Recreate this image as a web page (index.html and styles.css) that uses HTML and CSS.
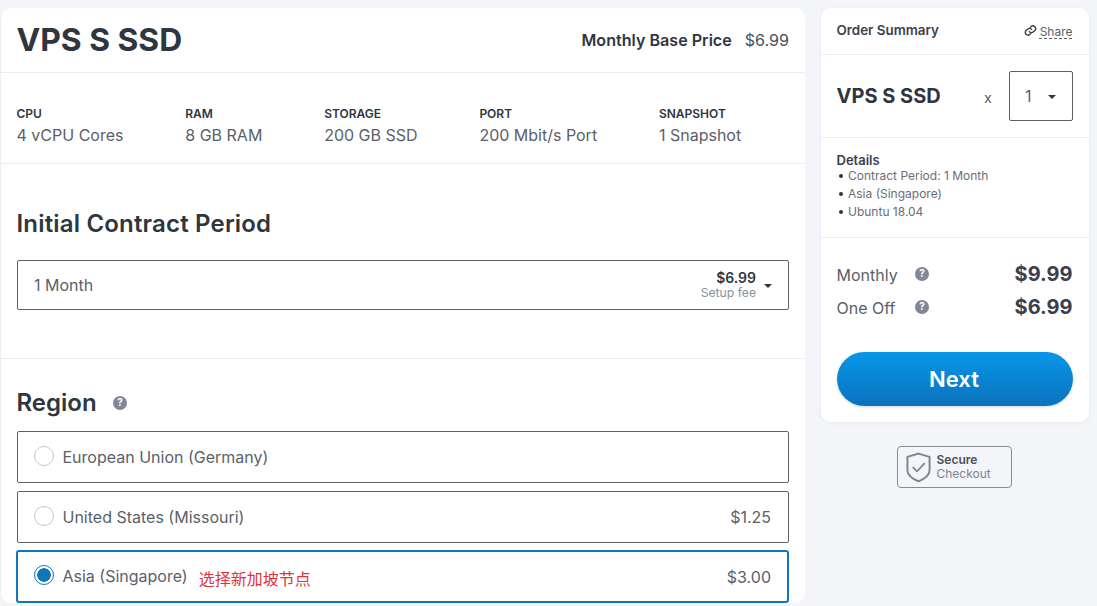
FILE: index.html
```html
<!DOCTYPE html>
<html lang="en">
<head>
<meta charset="utf-8">
<title>VPS S SSD</title>
<link rel="stylesheet" href="styles.css">
</head>
<body>
<div class="page">
  <main class="card product">
    <header class="product-head">
      <h1>VPS S SSD</h1>
      <div class="base-price"><strong>Monthly Base Price</strong><span>$6.99</span></div>
    </header>
    <section class="specs">
      <div class="spec"><b>CPU</b><span>4 vCPU Cores</span></div>
      <div class="spec"><b>RAM</b><span>8 GB RAM</span></div>
      <div class="spec"><b>STORAGE</b><span>200 GB SSD</span></div>
      <div class="spec"><b>PORT</b><span>200 Mbit/s Port</span></div>
      <div class="spec"><b>SNAPSHOT</b><span>1 Snapshot</span></div>
    </section>
    <section class="contract">
      <h2 class="contract-title">Initial Contract Period</h2>
      <div class="select">
        <span class="select-label">1 Month</span>
        <div class="setup"><b>$6.99</b><span>Setup fee</span></div>
        <i class="caret"></i>
      </div>
    </section>
    <section class="region">
      <h2 class="region-title">Region
        <svg class="help help-region" viewBox="0 0 14 14"><circle cx="7" cy="7" r="7" fill="#7f8798"/><text x="7" y="10.4" text-anchor="middle" class="help-q">?</text></svg>
      </h2>
      <div class="options">
        <label class="option"><i class="radio"></i><span class="option-name">European Union (Germany)</span></label>
        <label class="option"><i class="radio"></i><span class="option-name">United States (Missouri)</span><span class="option-price">$1.25</span></label>
        <label class="option selected"><i class="radio"></i><span class="option-name">Asia (Singapore)</span><span class="note">选择新加坡节点</span><span class="option-price">$3.00</span></label>
      </div>
    </section>
  </main>
  <aside class="side">
    <div class="card summary">
      <div class="sum-head">
        <b>Order Summary</b>
        <span class="share">
          <svg viewBox="0 0 24 24" class="link-icon"><path d="M10 14a5 5 0 0 0 7.5.5l3-3a5 5 0 0 0-7-7l-1.700 1.700M14 10a5 5 0 0 0-7.500-.5l-3 3a5 5 0 0 0 7 7l1.700-1.700" fill="none" stroke="#3b414c" stroke-width="2.600" stroke-linecap="round"/></svg>
          <u>Share</u>
        </span>
      </div>
      <div class="sum-product">
        <b>VPS S SSD</b>
        <span class="times">x</span>
        <div class="qty"><span>1</span><i class="caret"></i></div>
      </div>
      <div class="details">
        <b>Details</b>
        <ul>
          <li>Contract Period: 1 Month</li>
          <li>Asia (Singapore)</li>
          <li>Ubuntu 18.04</li>
        </ul>
      </div>
      <div class="totals">
        <div class="total-row">
          <span class="total-label">Monthly</span>
          <svg class="help" viewBox="0 0 14 14"><circle cx="7" cy="7" r="7" fill="#7f8798"/><text x="7" y="10.4" text-anchor="middle" class="help-q">?</text></svg>
          <b>$9.99</b>
        </div>
        <div class="total-row">
          <span class="total-label">One Off</span>
          <svg class="help" viewBox="0 0 14 14"><circle cx="7" cy="7" r="7" fill="#7f8798"/><text x="7" y="10.4" text-anchor="middle" class="help-q">?</text></svg>
          <b>$6.99</b>
        </div>
      </div>
      <button class="next">Next</button>
    </div>
    <div class="secure">
      <svg viewBox="0 0 26 32" class="shield"><path d="M13 1.500 24.500 5v14c0 5-5 8.500-11.500 11.500C6.500 27.500 1.500 24 1.500 19V5z" fill="none" stroke="#7d8492" stroke-width="2"/><path d="M7 15.500l4.500 4.500 8-8.500" fill="none" stroke="#7d8492" stroke-width="1.800"/></svg>
      <div class="secure-text"><b>Secure</b><span>Checkout</span></div>
    </div>
  </aside>
</div>
</body>
</html>
```

FILE: styles.css
```css
* { box-sizing: border-box; }
html, body { margin: 0; height: 100%; overflow: hidden; }
body {
  background: #f3f5f9;
  font-family: Inter, "Noto Sans CJK SC", sans-serif;
  color: #5b5f69;
}
h1, h2, ul { margin: 0; padding: 0; }
.page { display: flex; gap: 16px; padding: 8px 8px 0 0; align-items: flex-start; }
.card { background: #fff; border-radius: 10px; }
.product { width: 805px; flex: none; border-left: 1px solid #eceef1; }

.product-head {
  height: 65px; display: flex; align-items: center; justify-content: space-between;
  padding: 0 16px 0 15.500px; border-bottom: 1px solid #e9ebef;
}
h1 { font-size: 31.800px; font-weight: 700; color: #2f3640; line-height: 1; }
.base-price { display: flex; gap: 13px; font-size: 16.100px; }
.base-price strong { font-weight: 600; color: #2f3640; }
.base-price span { color: #4a4f59; }

.specs {
  height: 91px; display: flex; gap: 61.800px; padding: 33px 16px 0 15.500px;
  border-bottom: 1px solid #e9ebef;
}
.spec { display: flex; flex-direction: column; gap: 3px; }
.spec b { font-size: 12px; line-height: 16px; font-weight: 600; color: #2f3640; }
.spec span { font-size: 16px; line-height: 20px; }

.contract { height: 195px; padding: 45px 16px 0; border-bottom: 1px solid #e9ebef; }
h2 { font-size: 24px; line-height: 30px; font-weight: 600; color: #2f3640; }
.contract-title { letter-spacing: .18px; margin-left: -.5px; }
.select {
  margin-top: 21px; height: 50px; border: 1px solid #5c6068; border-radius: 2px;
  display: flex; align-items: center; padding: 0 16px 0 16px;
}
.select-label { flex: 1; font-size: 16px; }
.setup { display: flex; flex-direction: column; align-items: flex-end; margin-right: 8px; }
.setup b { font-size: 14px; line-height: 15px; font-weight: 600; color: #2f3640; }
.setup span { font-size: 12.200px; line-height: 16px; color: #8a909b; }
.caret {
  display: block; width: 0; height: 0; margin-top: 1px;
  border-left: 4px solid transparent; border-right: 4px solid transparent; border-top: 4px solid #2f3640;
}

.region { padding: 29px 16px 0; }
.region-title { display: flex; align-items: center; gap: 16.500px; margin-left: -.5px; }
.help { width: 14px; height: 14px; flex: none; }
.help-region { margin-top: -1px; }
.help-q { font: 700 10px Inter, sans-serif; fill: #fff; }
.options { margin-top: 13px; display: flex; flex-direction: column; gap: 8px; }
.option {
  height: 52px; border: 1px solid #5c6068; border-radius: 2px;
  display: flex; align-items: center; padding: 0 17px 0 16px; font-size: 16px;
}
.radio {
  width: 20px; height: 20px; border: 1px solid #c3c7cd; border-radius: 50%;
  margin-right: 8.500px; margin-top: -3px; flex: none; background: #fff;
}
.option-name { margin-top: -1px; }
.option-price { margin-left: auto; }
.selected {
  height: 53px; margin: -1px 0 0 -1px; border: 2px solid #1177bb; border-radius: 3px;
  padding: 0 16px 0 16px;
}
.selected .radio { border-color: #1177bb; background: radial-gradient(circle, #1177bb 0 6.500px, #fff 7px); }
.note { margin-left: 11px; font-size: 16px; color: #e0323c; font-family: "Noto Sans CJK SC", sans-serif; margin-top: 2px; }

.side { width: 268px; flex: none; display: flex; flex-direction: column; }
.summary { width: 100%; height: 414px; box-shadow: 0 1px 4px rgba(40, 50, 70, .06); }
.sum-head {
  height: 47px; display: flex; justify-content: space-between; align-items: center;
  padding: 0 16.500px 2px 15.500px; border-bottom: 1px solid #eceef2;
}
.sum-head b { font-size: 13.400px; font-weight: 600; color: #3b414c; }
.share { font-size: 12px; display: flex; align-items: center; gap: 3px; }
.share u { text-decoration: underline dashed; text-underline-offset: 2px; margin-top: 3px; }
.link-icon { width: 13px; height: 13px; }
.sum-product {
  height: 83px; display: flex; align-items: center; padding: 0 16px 0 15.500px;
  border-bottom: 1px solid #eceef2;
}
.sum-product b { font-size: 20px; font-weight: 700; color: #2f3640; width: 147.500px; }
.times { font-size: 14.500px; margin-top: 3px; width: 25px; }
.qty {
  width: 64px; height: 50px; border: 1px solid #5c6068; border-radius: 2px;
  display: flex; align-items: center; justify-content: space-between; padding: 0 16px 0 15px; font-size: 16px;
}
.details { height: 100px; padding: 15px 16px 0 15.500px; border-bottom: 1px solid #eceef2; }
.details b { display: block; font-size: 13px; line-height: 14px; font-weight: 600; color: #3b414c; }
.details ul { list-style: none; }
.details li { font-size: 12px; line-height: 18px; padding-left: 11.500px; position: relative; color: #6a6e78; }
.details li::before {
  content: ""; position: absolute; left: 2.500px; top: 7px; width: 4px; height: 4px; border-radius: 50%; background: #2f3640;
}
.totals { padding: 21px 16.500px 0 15.500px; display: flex; flex-direction: column; gap: 4px; }
.total-row { height: 29px; display: flex; align-items: center; }
.total-label { width: 78.500px; font-size: 16px; margin-top: 2px; }
.total-row b { margin-left: auto; font-size: 20px; font-weight: 700; color: #3b414c; }
.next {
  display: block; width: 236px; height: 54px; margin: 31px 16px 0; border: 0; border-radius: 27px;
  background: linear-gradient(#0796e8, #0b72bd); color: #fff; font: 600 22px Inter, sans-serif;
  padding: 0 2px 0 0;
  box-shadow: 0 1px 3px rgba(20, 60, 100, .2);
}
.secure {
  margin: 24px 0 0 76px; width: 115px; height: 42px; border: 1px solid #878c97; border-radius: 4px;
  display: flex; align-items: center; gap: 5.500px; padding-left: 8px;
}
.shield { width: 25px; height: 31px; }
.secure-text { display: flex; flex-direction: column; font-size: 12px; line-height: 14px; color: #7d8492; }
.secure-text b { font-weight: 600; color: #4a4f5a; }
```
